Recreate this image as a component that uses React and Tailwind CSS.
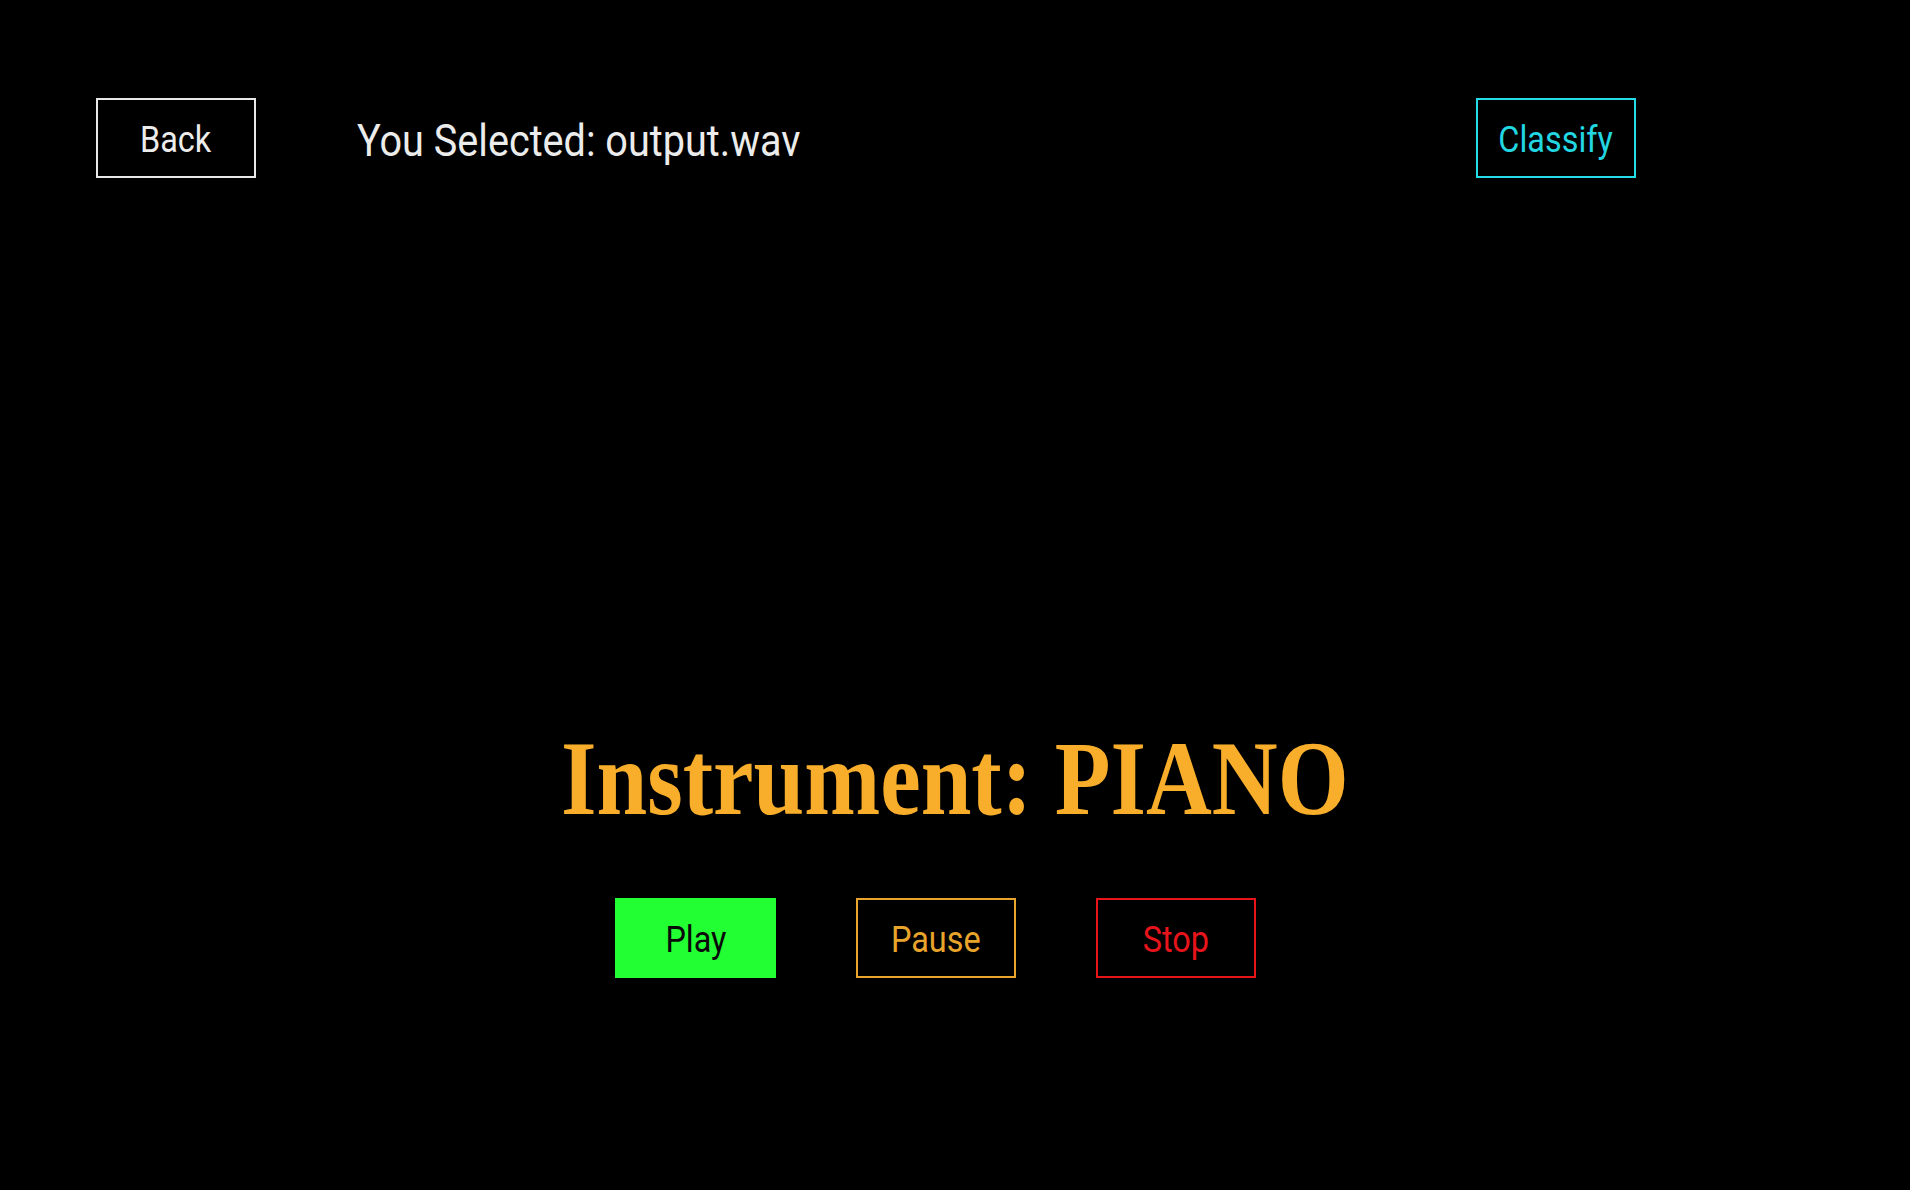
import React, { useState } from "react";

export default function App() {
  const [playing, setPlaying] = useState(false);

  return (
    <div
      className="min-h-screen bg-black text-white"
      style={{ fontFamily: "Roboto, 'Liberation Sans', sans-serif" }}
    >
      {/* top bar */}
      <div className="flex items-center pt-[98px] pl-[96px]">
        <button className="w-[160px] h-[80px] pt-[3px] border-2 border-[#e8e8e8] text-[36px] text-[#ececec]">
          <span className="inline-block scale-x-90">Back</span>
        </button>
        <p className="ml-[101px] mt-[6px] text-[44px] text-[#ececec] origin-left scale-x-90 whitespace-nowrap">
          You Selected: output.wav
        </p>
        <button className="ml-auto mr-[274px] w-[160px] h-[80px] pt-[3px] border-2 border-[#22dde8] text-[36px] text-[#22d6e2]">
          <span className="inline-block scale-x-90">Classify</span>
        </button>
      </div>

      {/* result */}
      <div className="flex flex-col items-center mt-[548px]">
        <h1
          className="text-[#f8ae2a] text-[106px] font-bold leading-none scale-x-[0.86] whitespace-nowrap"
          style={{ fontFamily: "'Liberation Serif', serif" }}
        >
          Instrument: PIANO
        </h1>
        <div className="flex gap-[80px] mt-[66px] mr-[39px]">
          <button
            onClick={() => setPlaying(true)}
            className="w-[161px] h-[80px] pt-[3px] bg-[#22ff33] text-[36px] text-[#0a0a0a]"
          >
            <span className="inline-block scale-x-90">Play</span>
          </button>
          <button
            onClick={() => setPlaying(false)}
            className="w-[160px] h-[80px] pt-[3px] border-2 border-[#e9a42b] text-[36px] text-[#e9a42b]"
          >
            <span className="inline-block scale-x-90">Pause</span>
          </button>
          <button
            onClick={() => setPlaying(false)}
            className="w-[160px] h-[80px] pt-[3px] border-2 border-[#e8141c] text-[36px] text-[#e8141c]"
          >
            <span className="inline-block scale-x-90">Stop</span>
          </button>
        </div>
      </div>
    </div>
  );
}
